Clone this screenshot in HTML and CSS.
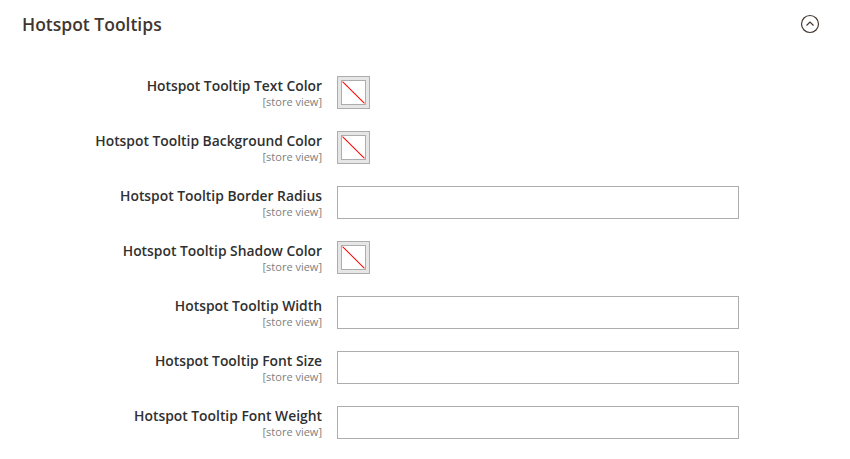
FILE: index.html
```html
<!DOCTYPE html>
<html lang="en">
<head>
    <meta charset="UTF-8">
    <title>Hotspot Tooltips</title>
    <link rel="stylesheet" href="styles.css">
</head>
<body>
    <section class="config-section">
        <div class="section-head">
            <h2>Hotspot Tooltips</h2>
            <span class="collapse-toggle">
                <svg width="20" height="20" viewBox="0 0 20 20">
                    <circle cx="10" cy="10" r="8.5" fill="none" stroke="#41362f" stroke-width="1.2"/>
                    <path d="M6.5 11.5 L10 8 L13.5 11.5" fill="none" stroke="#41362f" stroke-width="1.2"/>
                </svg>
            </span>
        </div>

        <div class="config-rows">
            <div class="field-label">
                <span class="label-text">Hotspot Tooltip Text Color</span>
                <span class="scope">[store view]</span>
            </div>
            <div class="field-control"><span class="swatch"><span class="swatch-inner"></span></span></div>

            <div class="field-label">
                <span class="label-text">Hotspot Tooltip Background Color</span>
                <span class="scope">[store view]</span>
            </div>
            <div class="field-control"><span class="swatch"><span class="swatch-inner"></span></span></div>

            <div class="field-label">
                <span class="label-text">Hotspot Tooltip Border Radius</span>
                <span class="scope">[store view]</span>
            </div>
            <div class="field-control"><input type="text" class="text-input"></div>

            <div class="field-label">
                <span class="label-text">Hotspot Tooltip Shadow Color</span>
                <span class="scope">[store view]</span>
            </div>
            <div class="field-control"><span class="swatch"><span class="swatch-inner"></span></span></div>

            <div class="field-label">
                <span class="label-text">Hotspot Tooltip Width</span>
                <span class="scope">[store view]</span>
            </div>
            <div class="field-control"><input type="text" class="text-input"></div>

            <div class="field-label">
                <span class="label-text">Hotspot Tooltip Font Size</span>
                <span class="scope">[store view]</span>
            </div>
            <div class="field-control"><input type="text" class="text-input"></div>

            <div class="field-label">
                <span class="label-text">Hotspot Tooltip Font Weight</span>
                <span class="scope">[store view]</span>
            </div>
            <div class="field-control"><input type="text" class="text-input"></div>
        </div>
    </section>
</body>
</html>
```

FILE: styles.css
```css
/* Admin config section */
body {
    margin: 0;
    background: #fff;
    font-family: 'Open Sans', 'Noto Sans', sans-serif;
    color: #303030;
}

.section-head {
    display: flex;
    align-items: center;
    justify-content: space-between;
    padding: 12px 30px 0 22px;
    height: 24px;
}

.section-head h2 {
    margin: 0;
    font-size: 17.5px;
    font-weight: 600;
    color: #41362f;
    line-height: 24px;
}

.collapse-toggle {
    display: flex;
}

.config-rows {
    display: grid;
    grid-template-columns: 322px 402px;
    column-gap: 15px;
    row-gap: 22px;
    margin-top: 40px;
}

.field-label {
    display: flex;
    flex-direction: column;
    align-items: flex-end;
    text-align: right;
}

.label-text {
    font-size: 13.85px;
    font-weight: 600;
    line-height: 20px;
    color: #303030;
}

.scope {
    font-size: 11px;
    line-height: 11px;
    color: #808080;
}

.field-control {
    display: flex;
}

.text-input {
    box-sizing: border-box;
    width: 402px;
    height: 33px;
    margin: 0;
    border: 1px solid #adadad;
    background: #fff;
    padding: 0 10px;
}

/* empty colour picker: grey frame, white box, red slash */
.swatch {
    box-sizing: border-box;
    width: 33px;
    height: 33px;
    padding: 3px;
    border: 1px solid #adadad;
    background: #e6e6e6;
}

.swatch-inner {
    display: block;
    position: relative;
    overflow: hidden;
    box-sizing: border-box;
    width: 25px;
    height: 25px;
    border: 1px solid #adadad;
    background: #fff;
}

.swatch-inner::after {
    content: "";
    position: absolute;
    left: -4px;
    top: 11px;
    width: 31px;
    height: 1px;
    background: #ff0000;
    transform: rotate(45deg);
}
```
